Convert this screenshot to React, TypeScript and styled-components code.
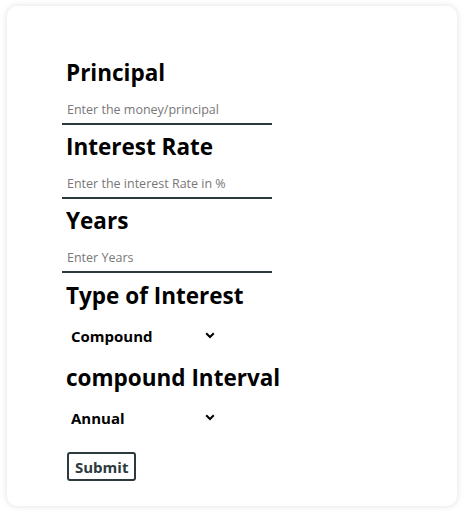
import React, { useState } from 'react'
import styled, { createGlobalStyle } from 'styled-components'

const GlobalStyle = createGlobalStyle`
  body {
    margin: 0;
    background: #ffffff;
    font-family: 'Open Sans', 'Noto Sans', sans-serif;
  }
`

const Page = styled.div`
  padding: 6px 7px;
`

const Card = styled.div`
  width: 450px;
  height: 500px;
  box-sizing: border-box;
  padding: 53px 55px 0;
  background: #fff;
  border-radius: 10px;
  box-shadow: 0 0 6px rgba(0, 0, 0, 0.13);
`

const Form = styled.form`
  display: flex;
  flex-direction: column;
  align-items: flex-start;
`

const Label = styled.label`
  display: block;
  padding-left: 4px;
  font-size: 22.5px;
  line-height: 28px;
  font-weight: 700;
  color: #000;
  white-space: nowrap;
`

const Input = styled.input`
  box-sizing: border-box;
  width: 210px;
  height: 32px;
  margin: 6px 0 8px;
  padding: 3px 5px 0;
  border: none;
  border-bottom: 2px solid #2c3a3d;
  outline: none;
  font-family: inherit;
  font-size: 12.5px;
  color: #222;

  &::placeholder {
    color: #777;
  }
`

const SelectWrap = styled.div<{ $after: number }>`
  position: relative;
  width: 152px;
  margin: 10px 0 ${(p) => p.$after}px 5px;
`

const Select = styled.select`
  appearance: none;
  width: 100%;
  height: 32px;
  padding: 0 4px;
  border: none;
  outline: none;
  background: transparent;
  font-family: inherit;
  font-size: 15px;
  font-weight: 700;
  color: #000;
`

const Chevron = styled.svg`
  position: absolute;
  right: 4px;
  top: 12px;
  pointer-events: none;
`

const Submit = styled.button`
  height: 29px;
  padding: 0 6px;
  border: 2px solid #2c3a3d;
  border-radius: 3px;
  background: #fff;
  color: #2c3a3d;
  font-family: inherit;
  font-size: 15px;
  font-weight: 700;
  margin-left: 5px;
`

const Field: React.FC<{ label: string; placeholder: string }> = ({
  label,
  placeholder,
}) => (
  <>
    <Label>{label}</Label>
    <Input placeholder={placeholder} />
  </>
)

const Dropdown: React.FC<{
  value: string
  options: string[]
  onChange: (v: string) => void
  after: number
}> = ({ value, options, onChange, after }) => (
  <SelectWrap $after={after}>
    <Select value={value} onChange={(e) => onChange(e.target.value)}>
      {options.map((o) => (
        <option key={o}>{o}</option>
      ))}
    </Select>
    <Chevron width="10" height="7" viewBox="0 0 10 7">
      <path d="M1.2 1.3 L5 5 L8.8 1.3" fill="none" stroke="#000" strokeWidth="2" />
    </Chevron>
  </SelectWrap>
)

const App: React.FC = () => {
  const [type, setType] = useState('Compound')
  const [interval, setInterval] = useState('Annual')

  return (
    <Page>
      <GlobalStyle />
      <Card>
        <Form onSubmit={(e) => e.preventDefault()}>
          <Field label="Principal" placeholder="Enter the money/principal" />
          <Field label="Interest Rate" placeholder="Enter the interest Rate in %" />
          <Field label="Years" placeholder="Enter Years" />

          <Label style={{ marginTop: 1 }}>Type of Interest</Label>
          <Dropdown
            value={type}
            options={['Compound', 'Simple']}
            onChange={setType}
            after={12}
          />

          <Label>compound Interval</Label>
          <Dropdown
            value={interval}
            options={['Annual', 'Semi-Annual', 'Quarterly', 'Monthly']}
            onChange={setInterval}
            after={18}
          />

          <Submit type="submit">Submit</Submit>
        </Form>
      </Card>
    </Page>
  )
}

export default App
